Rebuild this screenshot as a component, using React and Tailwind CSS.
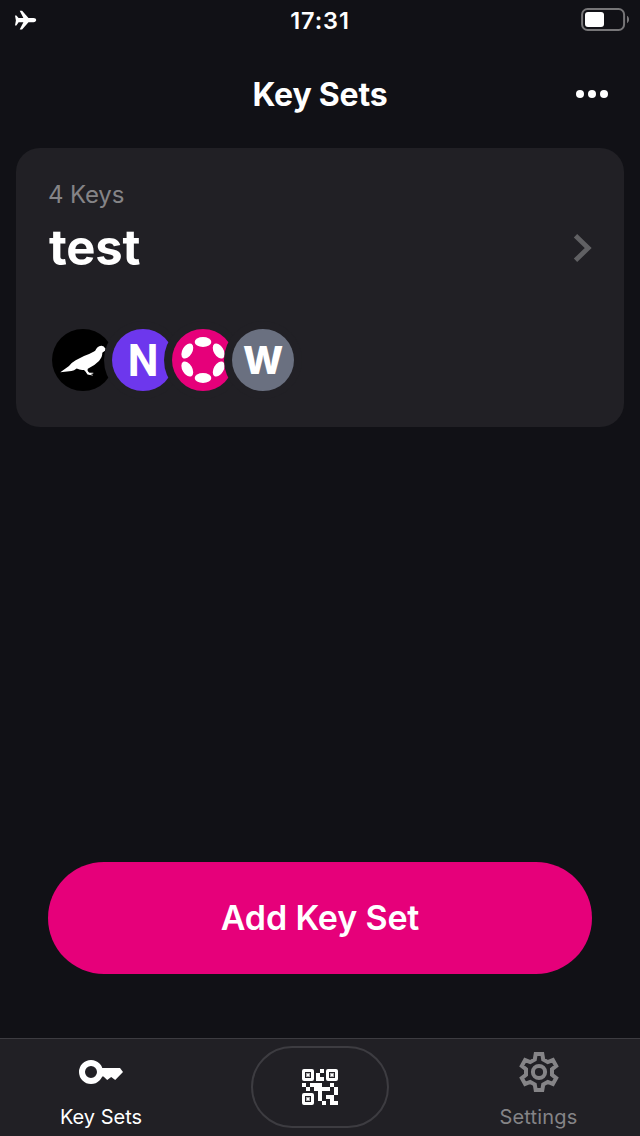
import React from "react";

function StatusBar() {
  return (
    <div className="flex h-10 items-center justify-between pl-[14px] pr-[11px]">
      <svg className="h-5 w-12" viewBox="0 0 48 20">
        <path
          fill="#fff"
          d="M1 5.4h1.4L4.600 8h4.800L5.700.800h2.400l6.400 7.200h5c1.600 0 2.700.900 2.700 2.100s-1.100 2.100-2.700 2.100h-5l-6.400 7.400H5.700l3.700-7.400H4.600L2.400 15.400H1l.900-5z"
        />
      </svg>
      <div className="pr-[3px] pt-[2px] text-[23.5px] font-semibold leading-[38px] tracking-[0.9px] [font-optical-sizing:none]">17:31</div>
      <svg className="h-6 w-12" viewBox="0 0 48 24">
        <rect x="1.100" y="1" width="42" height="21" rx="5.500" fill="none" stroke="#777678" strokeWidth="2" />
        <rect x="4" y="4" width="19" height="15" rx="3" fill="#fff" />
        <path d="M46 7.800c2.700 1.500 2.700 5.900 0 7.400z" fill="#777678" />
      </svg>
    </div>
  );
}

function Header() {
  return (
    <header className="grid h-[108px] grid-cols-[1fr_auto_1fr] items-center px-8">
      <h1 className="col-start-2 pt-[2px] text-[32px] font-bold leading-[44px] tracking-[-0.2px]">Key Sets</h1>
      <div className="flex justify-end gap-1">
        <span className="size-2 rounded-full bg-white" />
        <span className="size-2 rounded-full bg-white" />
        <span className="size-2 rounded-full bg-white" />
      </div>
    </header>
  );
}

function Kusama() {
  return (
    <svg className="size-[62px] rounded-full bg-black" viewBox="52 329 62 62">
      <path
        fill="#fff"
        d="M60.300 372.300L69 366Q71.500 362.500 75.700 360.200L84 356Q90 354 94 351.600C96 350.500 96 348.500 97.300 347.500Q99 345.800 101.300 345.800Q103.800 345.600 105.500 348.800L105 350.800L102.300 352.800C102.300 356 101.500 358 99 361Q95 365.300 87.800 368.800L87.500 370.200Q88 372 89.500 372.700L93.300 372.700V373.400L90.500 373.900L93 374.900L92.500 375.500L87.500 374.400Q85.500 371 84 369.900Q81.500 370.300 79.500 369.600L76.700 368.400Q74 370.400 71.500 370.900Z"
      />
    </svg>
  );
}

function Polkadot() {
  return (
    <svg className="size-[62px] rounded-full bg-[#e6007a] ring-8 ring-[#212025]" viewBox="-31 -31 62 62">
      <g fill="#fff">
        <ellipse cx="0" cy="-18" rx="8.300" ry="4.900" />
        <ellipse cx="0" cy="18" rx="8.300" ry="4.900" />
        <ellipse rx="8.300" ry="4.900" transform="translate(15.700 -9) rotate(60)" />
        <ellipse rx="8.300" ry="4.900" transform="translate(15.700 9) rotate(-60)" />
        <ellipse rx="8.300" ry="4.900" transform="translate(-15.700 -9) rotate(-60)" />
        <ellipse rx="8.300" ry="4.900" transform="translate(-15.700 9) rotate(60)" />
      </g>
    </svg>
  );
}

function KeySetCard() {
  return (
    <section className="mx-4 h-[279px] rounded-[24px] bg-[#212025] px-8 pt-7">
      <div className="pt-px text-[24px] leading-[35px] tracking-[-0.15px] text-[#858487]">4 Keys</div>
      <div className="flex h-[72px] items-center justify-between">
        <h2 className="pl-px text-[49px] font-bold leading-[72px] tracking-[-0.2px] [font-optical-sizing:none]">test</h2>
        <svg className="h-8 w-5" viewBox="0 0 20 32" fill="none" stroke="#606063" strokeWidth="4.800">
          <path d="M3.500 3.700 16.200 16 3.500 28.300" />
        </svg>
      </div>
      <div className="mt-[45px] flex pl-1">
        <Kusama />
        <div className="-ml-0.5 flex size-[62px] items-center justify-center rounded-full bg-[#6d37ed] pt-[3px] font-['Roboto',sans-serif] text-[43.5px] font-bold ring-8 ring-[#212025]">
          N
        </div>
        <div className="-ml-0.5 flex rounded-full">
          <Polkadot />
        </div>
        <div className="-ml-0.5 flex size-[62px] items-center justify-center rounded-full bg-[#6a7080] text-[38px] font-extrabold ring-8 ring-[#212025]">
          W
        </div>
      </div>
    </section>
  );
}

function KeyIcon() {
  return (
    <svg className="h-10 w-[46px]" viewBox="78 1052 46 40">
      <circle cx="91" cy="1072" r="9" fill="none" stroke="#fff" strokeWidth="6" />
      <path fill="#fff" d="M101 1068H120L123 1072L115.200 1080L111.200 1077L107.200 1080L103.500 1076.500H101Z" />
    </svg>
  );
}

function GearIcon() {
  return (
    <svg className="size-10" viewBox="-20 -20 40 40" fill="none" stroke="#858487" strokeWidth="4">
      <circle r="6.100" />
      <path d="M-3.300-18H3.300L4.200-12.600L8.800-9.900L13.900-11.900L17.200-6.100L13-2.700V2.700L17.200 6.100L13.900 11.900L8.800 9.900L4.200 12.600L3.300 18H-3.300L-4.200 12.600L-8.800 9.900L-13.900 11.900L-17.200 6.100L-13 2.700V-2.700L-17.200-6.100L-13.900-11.900L-8.800-9.900L-4.200-12.600Z" />
    </svg>
  );
}

function Finder({ x, y }) {
  return (
    <g transform={`translate(${x} ${y})`}>
      <rect x="1.500" y="1.500" width="9" height="9" rx="0.500" fill="none" stroke="#fff" strokeWidth="3" />
      <rect x="4" y="4" width="4" height="4" fill="#aaa9ab" />
      <rect x="5" y="5" width="2" height="2" fill="#fff" />
    </g>
  );
}

function QrIcon() {
  return (
    <svg className="size-9" viewBox="0 0 36 36">
      <Finder x={0} y={0} />
      <Finder x={24} y={0} />
      <Finder x={0} y={24} />
      <path
        fill="#fff"
        d="M18 0h4v4h-4zM14 4h4v4h4v4h-8zM0 14h4v4H0zM4 18h4v4H4zM8 14h12v4h8v4h-8v10h-4V22h-4v-4H8zM28 14h4v4h-4zM32 18h4v8h-4zM20 32h4v4h-4zM24 26h8v6h4v4h-8v-6h-4z"
      />
    </svg>
  );
}

function TabBar() {
  return (
    <nav className="grid h-[98px] grid-cols-[202px_1fr_202px] border-t border-[#3d3c41] bg-[#212025]">
      <div className="flex flex-col items-center pt-[13px]">
        <KeyIcon />
        <span className="mt-[11px] text-[20px] leading-7">Key Sets</span>
      </div>
      <div className="flex justify-center pt-[7px]">
        <div className="flex h-[82px] w-[138px] items-center justify-center rounded-full border-2 border-[#3d3c41]">
          <QrIcon />
        </div>
      </div>
      <div className="flex flex-col items-center pt-[13px] text-[#858487]">
        <GearIcon />
        <span className="mr-[1px] mt-[11px] text-[20px] leading-7 tracking-[0.2px]">Settings</span>
      </div>
    </nav>
  );
}

export default function App() {
  return (
    <div className="flex h-[1136px] w-[640px] flex-col overflow-hidden bg-[#111116] font-['Inter',sans-serif] text-white">
      <StatusBar />
      <Header />
      <KeySetCard />
      <div className="mt-auto px-12 pb-16">
        <button className="h-28 w-full rounded-full bg-[#e6007a] pb-0.5 text-[34px] font-semibold tracking-[-0.15px]">Add Key Set</button>
      </div>
      <TabBar />
    </div>
  );
}
